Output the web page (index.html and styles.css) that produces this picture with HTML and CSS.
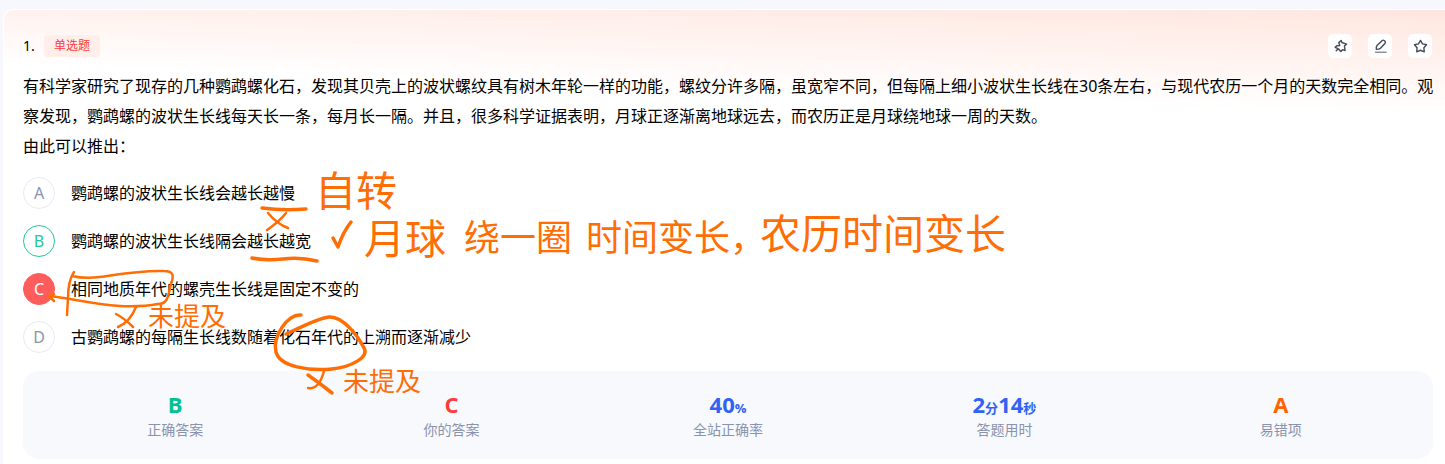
FILE: index.html
```html
<!DOCTYPE html>
<html lang="zh-CN">
<head>
<meta charset="utf-8">
<meta name="viewport" content="width=device-width, initial-scale=1">
<title>单选题</title>
<link rel="stylesheet" href="styles.css">
</head>
<body>
<main class="card">
  <header class="head">
    <span class="number">1.</span>
    <span class="tag">单选题</span>
    <div class="tools">
      <button class="tool" type="button" aria-label="固定">
        <svg viewBox="0 0 24 24"><path d="M9.500 6.500L13 3.500l1 2.800 6.500 2.400-3 2.600 1 6.400-3.700-1.200-2.300 2.500-3.300-3.500-4.700-2.300 2.300-2.200 4.200-.5zM8.500 15.500L6 18"/></svg>
      </button>
      <button class="tool" type="button" aria-label="笔记">
        <svg viewBox="0 0 24 24"><path d="M14.500 3.500q1.200-1 2.500 0l1.300 1.200q1.200 1.300.2 2.600l-6.500 7.200q-1.500 1.500-5.800 1.500-.7-3.500.8-5.300z"/><path class="soft" d="M5 20h15"/></svg>
      </button>
      <button class="tool" type="button" aria-label="收藏">
        <svg viewBox="0 0 24 24"><path d="M12 3.500l2.800 4.800 5.700 1.200-3.700 4.300.5 5.700-5.300-2.200-5.300 2.200.5-5.700-3.700-4.300 5.700-1.200z"/></svg>
      </button>
    </div>
  </header>

  <div class="stem">
    <p>有科学家研究了现存的几种鹦鹉螺化石，发现其贝壳上的波状螺纹具有树木年轮一样的功能，螺纹分许多隔，虽宽窄不同，但每隔上细小波状生长线在30条左右，与现代农历一个月的天数完全相同。观察发现，鹦鹉螺的波状生长线每天长一条，每月长一隔。并且，很多科学证据表明，月球正逐渐离地球远去，而农历正是月球绕地球一周的天数。</p>
    <p>由此可以推出：</p>
  </div>

  <div class="options" role="radiogroup" aria-label="选项">
    <label class="option"><input type="radio" name="answer" value="A"><span class="letter">A</span><span>鹦鹉螺的波状生长线会越长越慢</span></label>
    <label class="option correct"><input type="radio" name="answer" value="B"><span class="letter">B</span><span>鹦鹉螺的波状生长线隔会越长越宽</span></label>
    <label class="option wrong"><input type="radio" name="answer" value="C" checked><span class="letter">C</span><span>相同地质年代的螺壳生长线是固定不变的</span></label>
    <label class="option"><input type="radio" name="answer" value="D"><span class="letter">D</span><span>古鹦鹉螺的每隔生长线数随着化石年代的上溯而逐渐减少</span></label>
  </div>

  <dl class="stats">
    <div class="stat"><dd class="green">B</dd><dt>正确答案</dt></div>
    <div class="stat"><dd class="red">C</dd><dt>你的答案</dt></div>
    <div class="stat"><dd class="blue">40<small>%</small></dd><dt>全站正确率</dt></div>
    <div class="stat"><dd class="blue">2<small>分</small>14<small>秒</small></dd><dt>答题用时</dt></div>
    <div class="stat"><dd class="orange">A</dd><dt>易错项</dt></div>
  </dl>
</main>

<svg class="ink" width="1020" height="410" viewBox="0 0 1020 410">
  <g class="marks">
    <path class="bold" d="M262 208Q283 211 306 209"/>
    <path d="M268 213Q277 224 288 228M286 213Q280 221 267 230"/>
    <path class="bold" d="M252 258Q266 261 283 259T317 261"/>
    <path class="bold" d="M333 238L338 247Q343 232 351 222"/>
    <path d="M74 272Q68 281 68 298L67 315M72 276Q84 279 100 277C121 274 142 270 164 271C174 271 174 276 171 284C168 296 168 304 158 304Q142 307 120 306C90 304 70 298 49 296M49 296L54 294M49 296L54 301"/>
    <path d="M116 314Q124 318 133 327M136 307Q130 322 118 327"/>
    <path class="bold" d="M301 315C288 313 272 337 276 352C280 367 309 371 332 369C351 367 370 357 364 348C358 336 343 316 329 317C315 319 296 330 286 334"/>
    <path class="bold" d="M308 375Q318 382 332 393"/>
    <path d="M324 371Q319 390 308 388"/>
  </g>
  <g class="words">
    <text class="large" x="315" y="206">自转</text>
    <text class="large" x="364" y="254">月球</text>
    <text class="medium" x="464" y="251">绕一圈</text>
    <text class="medium" x="586" y="251">时间变长，</text>
    <text class="large" x="760" y="249">农历时间变长</text>
    <text class="small" x="148" y="326">未提及</text>
    <text class="small" x="343" y="391">未提及</text>
  </g>
</svg>
</body>
</html>
```
FILE: styles.css
```css
* { box-sizing: border-box; }

body {
  position: relative;
  margin: 0;
  padding: 9px 0 0 3px;
  min-height: 100vh;
  display: flex;
  overflow-x: hidden;
  background: #f7f8fd;
  color: #000;
  font: 16px/30px "Noto Sans", "Noto Sans CJK SC", sans-serif;
}

.card {
  flex: 1;
  min-width: 0;
  padding: 24px 10px 4px 19px;
  border: 1px solid #fff;
  border-right: 0;
  border-bottom: 0;
  border-radius: 10px 0 0 0;
  background: linear-gradient(182deg, #ffe6df 0, #fff 105px);
}

.head {
  display: flex;
  align-items: center;
  height: 24px;
  padding-right: 3px;
}

.number { width: 21px; font-size: 14px; }

.tag {
  padding: 0 10px;
  border-radius: 4px;
  background: #ffeeea;
  color: #ff3b3b;
  font-size: 12px;
  line-height: 22px;
}

.tools { display: flex; gap: 16px; margin-left: auto; }

.tool {
  display: grid;
  place-items: center;
  width: 24px;
  height: 24px;
  padding: 0;
  border: 0;
  border-radius: 5px;
  background: #fff;
}

.tool svg {
  width: 17px;
  height: 17px;
  fill: none;
  stroke: #454b58;
  stroke-width: 2;
  stroke-linejoin: round;
  stroke-linecap: round;
}

.tool .soft { stroke: #8b8f99; }

.stem { margin-top: 13px; }
.stem p { margin: 0; }

.options {
  display: grid;
  gap: 16px;
  margin-top: 16px;
}

.option {
  position: relative;
  display: flex;
  align-items: center;
  gap: 16px;
  line-height: 32px;
}

.option input {
  position: absolute;
  width: 32px;
  height: 32px;
  margin: 0;
  opacity: 0;
}

.letter {
  width: 32px;
  height: 32px;
  border: 1px solid #e7eaf6;
  border-radius: 50%;
  background: #fff;
  color: #8a93ab;
  line-height: 30px;
  text-align: center;
}

.correct .letter { border-color: #26c79a; color: #26c79a; }
.wrong .letter { border-color: #ff5c5c; background: #ff5c5c; color: #fff; }

.stats {
  display: flex;
  margin: 18px 2px 0 0;
  padding: 18px 14px;
  border-radius: 16px;
  background: #f7f9fd;
}

.stat { flex: 1; text-align: center; }

.stat dd {
  height: 30px;
  margin: 0;
  font-family: "Open Sans", "Noto Sans CJK SC", sans-serif;
  font-size: 22px;
  font-weight: 700;
  line-height: 30px;
}

.stat small { font-size: 13px; line-height: 1; }

.stat dt {
  color: #8a93ab;
  font-size: 14px;
  line-height: 22px;
}

.green { color: #00c291; }
.red { color: #ff3b3b; }
.blue { color: #2f62f5; }
.orange { color: #ff6200; }

.ink {
  position: absolute;
  left: 0;
  top: 0;
  pointer-events: none;
}

.marks {
  fill: none;
  stroke: #ff6d05;
  stroke-width: 2.5;
  stroke-linecap: round;
  stroke-linejoin: round;
}

.marks .bold { stroke-width: 3.5; }

.words {
  fill: #ff6d05;
  font-family: "Noto Sans CJK SC", sans-serif;
}

.large { font-size: 41px; }
.medium { font-size: 36px; }
.small { font-size: 26px; }
```
